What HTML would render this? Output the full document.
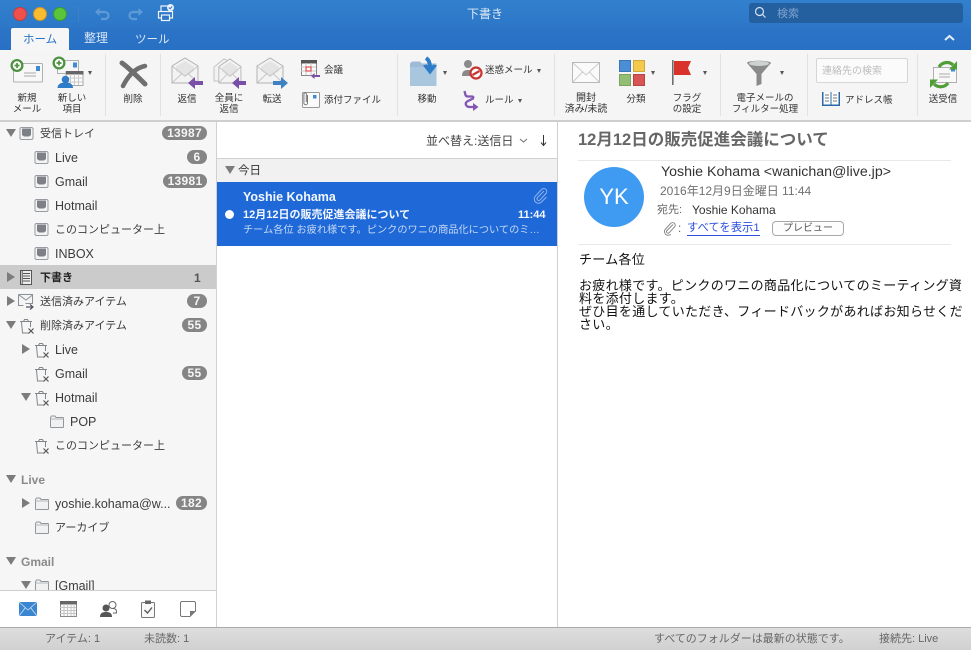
<!DOCTYPE html>
<html lang="ja"><head><meta charset="utf-8"><title>下書き</title>
<style>
html,body{margin:0;padding:0;width:971px;height:650px;overflow:hidden;background:#fff}
body{font-family:"Liberation Sans","Noto Sans CJK JP",sans-serif;color:#222;position:relative}
.a,.t,.c{position:absolute;white-space:nowrap}
.t{font-size:12px;line-height:14px}
.c{font-size:9.5px;line-height:10.5px;text-align:center;color:#333;transform:translateX(-50%)}
.r{position:absolute;white-space:nowrap;font-size:9.5px;line-height:12px;color:#333}
svg{position:absolute;overflow:visible}
.sep{position:absolute;top:54px;width:1px;height:62px;background:#e2e2e2}
.b{position:absolute;height:14px;border-radius:7px;background:#858585;color:#f5f5f5;font-size:12px;letter-spacing:.3px;font-weight:bold;line-height:14px;text-align:center}
.n{position:absolute;margin-top:1px;font-size:12.5px;line-height:14px;color:#3c3c3c;white-space:nowrap}
.j{font-size:11px}
.h{position:absolute;margin-top:1px;font-size:12px;font-weight:bold;line-height:14px;color:#8a8a8a}
.tri-d{position:absolute;width:0;height:0;border-left:5px solid transparent;border-right:5px solid transparent;border-top:8px solid #7c7c7c}
.tri-r{position:absolute;width:0;height:0;border-top:5px solid transparent;border-bottom:5px solid transparent;border-left:8px solid #7c7c7c}
.dd{position:absolute;width:0;height:0;border-left:2.5px solid transparent;border-right:2.5px solid transparent;border-top:4px solid #555}
.tile{position:absolute;width:12px;height:12px;box-sizing:border-box}
</style></head><body>
<svg width="0" height="0" style="position:absolute">
<defs>
<g id="inbox"><path d="M2 1.500h11l1 1v10l-1 1H2l-1-1v-10z" fill="#f4f4f4" stroke="#969ba1"/><path d="M3 2.500h9v6.500l-2 1.500H5L3 9z" fill="#7d8186"/></g>
<g id="trash"><path d="M2.500 4l1 11h6" fill="none" stroke="#80868c"/><path d="M11.500 4v5" stroke="#80868c"/><path d="M1 3.500h12M4.500 3.500l1-2h3l1 2" fill="none" stroke="#80868c"/><path d="M9.500 10.500l5 5m0-5l-5 5" stroke="#555" stroke-width="1.200"/></g>
<g id="folder"><path d="M1.500 3.500l1-1.500h3.500l1 1.500h7l.5 .5v9l-.5 .5h-12l-.5-.5z" fill="#f1f1f1" stroke="#92979c"/><path d="M1.500 5h13" stroke="#b5b8bb"/></g>
<g id="env"><path d="M1 9L14 1 27 9V26H1z" fill="#f3f3f3" stroke="#b2b2b2"/><path d="M5 9.500L14 4l9 5.500V14l-9 6-9-6z" fill="#e4e4e4"/><path d="M1.500 9.500L14 19 26.500 9.500M1.500 25.500l9.500-9M26.500 25.500l-9.500-9" stroke="#c6c6c6" fill="none"/></g>
</defs></svg>

<!-- title bar -->
<div class="a" style="left:0;top:0;width:971px;height:50px;background:linear-gradient(#3280cd,#2870c4)"></div>
<div class="a" style="left:13px;top:7px;width:12px;height:12px;border-radius:50%;background:#f0504c;border:.5px solid #c93d3a"></div>
<div class="a" style="left:33px;top:7px;width:12px;height:12px;border-radius:50%;background:#f8bc2e;border:.5px solid #c9962a"></div>
<div class="a" style="left:53px;top:7px;width:12px;height:12px;border-radius:50%;background:#5ac53b;border:.5px solid #3d9a2e"></div>
<div class="a" style="left:78px;top:6px;width:1px;height:16px;background:#4180c2"></div>
<svg style="left:94px;top:7px" width="17" height="13"><path d="M3 5h8a3.500 3.500 0 0 1 0 7H7" fill="none" stroke="#5f9ad6" stroke-width="2.200"/><path d="M1 5l4.500-4v8z" fill="#5f9ad6"/></svg>
<svg style="left:127px;top:7px" width="17" height="13"><path d="M14 5H6a3.500 3.500 0 0 0 0 7h4" fill="none" stroke="#5f9ad6" stroke-width="2.200"/><path d="M16 5l-4.500-4v8z" fill="#5f9ad6"/></svg>
<svg style="left:157px;top:4px" width="18" height="18"><path d="M4 7V2h8v5M4 14H1.500V7.500h14V14H13" fill="#2f78c8" stroke="#eef4fb" stroke-width="1.200"/><rect x="4.500" y="11" width="8" height="5.500" fill="#2f78c8" stroke="#eef4fb" stroke-width="1.200"/><circle cx="13.500" cy="3.500" r="3.500" fill="#eaf2fb"/><path d="M11.800 3.500l1.300 1.300 2-2.300" stroke="#2f78c8" fill="none"/></svg>
<div class="t" style="left:467px;top:7px;color:#dfeaf6">下書き</div>
<div class="a" style="left:749px;top:3px;width:214px;height:20px;border-radius:3px;background:#245f9f"></div>
<svg style="left:754px;top:6px" width="13" height="13"><circle cx="5.500" cy="5.500" r="4" fill="none" stroke="#d5e2f0" stroke-width="1.200"/><path d="M8.500 8.500l3 3" stroke="#d5e2f0" stroke-width="1.200"/></svg>
<div class="t" style="left:777px;top:7px;font-size:11px;color:#7fa5cf">検索</div>
<!-- tabs -->
<div class="a" style="left:0;top:28px;width:971px;height:22px;background:linear-gradient(#2b74c6,#2870c4)"></div>
<div class="a" style="left:11px;top:28px;width:58px;height:22px;background:#f6f6f6;border-radius:2px 2px 0 0"></div>
<div class="t" style="left:23px;top:33px;color:#2a74c5;font-size:11.500px">ホーム</div>
<div class="t" style="left:84px;top:31px;color:#d9e7f6">整理</div>
<div class="t" style="left:135px;top:33px;color:#d9e7f6;font-size:11.500px">ツール</div>
<svg style="left:944px;top:34px" width="11" height="8"><path d="M1 6l4.500-4L10 6" fill="none" stroke="#e4eef8" stroke-width="2"/></svg>

<!-- ribbon -->
<div class="a" style="left:0;top:50px;width:971px;height:70px;background:#f5f5f5"></div>
<div class="a" style="left:0;top:120px;width:971px;height:2px;background:#cfcfcf"></div>
<div class="sep" style="left:105px"></div><div class="sep" style="left:160px"></div><div class="sep" style="left:397px"></div><div class="sep" style="left:554px"></div>
<div class="sep" style="left:720px"></div><div class="sep" style="left:807px"></div><div class="sep" style="left:917px"></div>

<!-- new mail -->
<svg style="left:10px;top:58px" width="34" height="26"><rect x="3.500" y="5.500" width="29" height="18.500" rx="1" fill="#f8f8f8" stroke="#b0b0b0"/><rect x="26" y="8" width="4" height="5" fill="#3d8bd5"/><path d="M14 15h12M14 18h12" stroke="#aaa"/><circle cx="7" cy="7.500" r="6.500" fill="#4d9240"/><circle cx="7" cy="7.500" r="4.200" fill="#fff"/><path d="M7 5v5M4.500 7.500h5" stroke="#4d9240" stroke-width="1.700"/></svg>
<div class="c" style="left:27px;top:94px">新規<br>メール</div>
<!-- new item -->
<svg style="left:53px;top:57px" width="36" height="33"><rect x="4.500" y="3.500" width="21" height="13" fill="#f6f6f6" stroke="#b0b0b0"/><rect x="20" y="5.500" width="4" height="5" fill="#3d8bd5"/><rect x="13" y="14.500" width="17" height="14" fill="#fbfbfb" stroke="#a8a8a8"/><rect x="13" y="14" width="17.500" height="3.500" fill="#666"/><path d="M17.500 17v11M21.500 17v11M25.500 17v11M13 21h17M13 25h17" stroke="#cacaca"/><circle cx="12.500" cy="22.500" r="3.800" fill="#2f7cc9"/><path d="M4.500 31c0-4 3.500-5.500 8-5.500s7.500 1.500 7.500 5.500z" fill="#2f7cc9"/><circle cx="6" cy="6" r="6.500" fill="#4d9240"/><circle cx="6" cy="6" r="4.200" fill="#fff"/><path d="M6 3.500v5M3.500 6h5" stroke="#4d9240" stroke-width="1.700"/></svg>
<div class="dd" style="left:88px;top:71px"></div>
<div class="c" style="left:72px;top:94px">新しい<br>項目</div>
<!-- delete -->
<svg style="left:118px;top:59px" width="30" height="30"><path d="M4 4C11 9 20 18 27 25" fill="none" stroke="#6f6f6f" stroke-width="5" stroke-linecap="round"/><path d="M27 7C17 9 10 17 5 27" fill="none" stroke="#6f6f6f" stroke-width="4.500" stroke-linecap="round"/></svg>
<div class="c" style="left:133px;top:95px">削除</div>
<!-- reply -->
<svg style="left:171px;top:57px" width="34" height="34"><use href="#env"/><path d="M17 26l7-6v4h8v4h-8v4z" fill="#7a4fa8"/></svg>
<div class="c" style="left:187px;top:95px">返信</div>
<svg style="left:213px;top:57px" width="36" height="34"><path d="M1 10L11 2l9 4v18H1z" fill="#f2f2f2" stroke="#c4c4c4"/><use href="#env" transform="translate(5,1) scale(.85,.96)"/><path d="M19 26l7-6v4h7v4h-7v4z" fill="#7a4fa8"/></svg>
<div class="c" style="left:229px;top:94px">全員に<br>返信</div>
<svg style="left:256px;top:57px" width="34" height="34"><use href="#env"/><path d="M32 26l-7-6v4h-8v4h8v4z" fill="#3f82c4"/></svg>
<div class="c" style="left:272px;top:95px">転送</div>
<!-- meeting -->
<svg style="left:301px;top:60px" width="20" height="20"><rect x=".500" y=".500" width="15" height="15" fill="#fafafa" stroke="#888"/><rect x="0" y="0" width="16" height="3.500" fill="#555"/><path d="M5 3v12M10 3v12M0 7h15M0 11h15" stroke="#c8c8c8"/><rect x="5" y="7" width="5" height="4" fill="none" stroke="#d33"/><path d="M10 16l3.500-3v2H19v2h-5.500v2z" fill="#7a4fa8"/></svg>
<div class="r" style="left:324px;top:65px">会議</div>
<svg style="left:301px;top:91px" width="19" height="17"><rect x="1.500" y="1.500" width="17" height="15" rx="1" fill="#fafafa" stroke="#999"/><rect x="12" y="4" width="3.500" height="3.500" fill="#3d8bd5"/><path d="M6.500 4v8a1.800 1.800 0 0 1-3.600 0V3a1.200 1.200 0 0 1 2.400 0v8" fill="none" stroke="#777"/></svg>
<div class="r" style="left:324px;top:95px">添付ファイル</div>
<!-- move -->
<svg style="left:409px;top:57px" width="32" height="30"><path d="M1 6.500l2-2h8l2 2h14.500V29H1z" fill="#9dbbd6"/><path d="M1 10h26.500v19H1z" fill="#a9c6df"/><path d="M17 1c3 2 4 5 4 9" fill="none" stroke="#2f7cc9" stroke-width="4"/><path d="M14 8.500l7 9 7-9-3.500-1-3.500 2.500-3.500-2.500z" fill="#2f7cc9"/></svg>
<div class="dd" style="left:443px;top:71px"></div>
<div class="c" style="left:427px;top:95px">移動</div>
<svg style="left:461px;top:59px" width="22" height="21"><circle cx="7" cy="5" r="4" fill="#8a8a8a"/><path d="M1 17c0-5 2.500-6 6-6s6 1 6 6z" fill="#8a8a8a"/><circle cx="15" cy="14" r="5.500" fill="#fff" stroke="#c9332f" stroke-width="2.200"/><path d="M11.500 16l7-4" stroke="#c9332f" stroke-width="2.200"/></svg>
<div class="r" style="left:485px;top:65px">迷惑メール</div>
<div class="dd" style="left:537px;top:69px"></div>
<svg style="left:462px;top:90px" width="17" height="21"><path d="M2.500 1l1 4Q4 6.500 6 6.500h4Q12 6.500 11 8.500L6 11Q3 12.500 4 15 5 17 8 17h4" fill="none" stroke="#8256b4" stroke-width="2.300"/><path d="M11 13l5.500 4-5.500 4z" fill="#8256b4"/></svg>
<div class="r" style="left:485px;top:95px">ルール</div>
<div class="dd" style="left:518px;top:99px"></div>
<!-- read -->
<svg style="left:572px;top:62px" width="28" height="22"><rect x=".500" y=".500" width="27" height="20" fill="#fafafa" stroke="#b8b8b8"/><path d="M1 1l13 12L27 1M1 20l9.500-10M27 20l-9.500-10" fill="none" stroke="#cbcbcb"/></svg>
<div class="c" style="left:586px;top:94px;font-size:10px">開封<br>済み/未読</div>
<!-- categories -->
<div class="tile" style="left:619px;top:60px;background:#4a8fd6;border:.5px solid #3a76b3"></div>
<div class="tile" style="left:633px;top:60px;background:#f5ca4a;border:.5px solid #d1a83a"></div>
<div class="tile" style="left:619px;top:74px;background:#93bd72;border:.5px solid #7da35f"></div>
<div class="tile" style="left:633px;top:74px;background:#d95454;border:.5px solid #b84646"></div>
<div class="dd" style="left:651px;top:71px"></div>
<div class="c" style="left:636px;top:95px">分類</div>
<!-- flag -->
<svg style="left:672px;top:60px" width="22" height="26"><path d="M.800 0v25" stroke="#666" stroke-width="1.500"/><path d="M2 1h17l-3 7 3 7H2z" fill="#d9322c"/></svg>
<div class="dd" style="left:703px;top:71px"></div>
<div class="c" style="left:687px;top:94px">フラグ<br>の設定</div>
<!-- filter -->
<svg style="left:746px;top:60px" width="26" height="28"><path d="M1 3c0-3 24-3 24 0L15.500 14v10l-5 2V14z" fill="#8a8a8a"/><ellipse cx="13" cy="3.500" rx="10" ry="2.500" fill="#cfd2d2"/></svg>
<div class="dd" style="left:780px;top:71px"></div>
<div class="c" style="left:765px;top:94px">電子メールの<br>フィルター処理</div>
<!-- contact search -->
<div class="a" style="left:816px;top:58px;width:90px;height:23px;background:#fbfbfb;border:1px solid #d6d6d6;border-radius:2px"></div>
<div class="t" style="left:822px;top:65px;font-size:10px;color:#bcbcbc">連絡先の検索</div>
<svg style="left:821px;top:91px" width="20" height="16"><path d="M1 1h18v14H1z" fill="#2a67a8"/><path d="M2.500 1h7v12.500h-7zM10.500 1h7v12.500h-7z" fill="#fdfdfd"/><path d="M4 4h4M4 7h4M4 10h4M12 4h4M12 7h4M12 10h4" stroke="#777"/></svg>
<div class="r" style="left:845px;top:95px">アドレス帳</div>
<!-- send/receive -->
<svg style="left:929px;top:60px" width="29" height="29"><rect x="4.500" y="7.500" width="23" height="15" fill="#f8f8f8" stroke="#b0b0b0"/><rect x="22" y="9" width="4" height="2.500" fill="#3d8bd5"/><path d="M10 14h11M10 17h11" stroke="#aaa"/><path d="M10 7C13 2 20 1 24 5" fill="none" stroke="#4f9e37" stroke-width="3.200"/><path d="M28 1v8.500h-8z" fill="#4f9e37"/><path d="M19 23C16 27.500 9 28 5 24" fill="none" stroke="#4f9e37" stroke-width="3.200"/><path d="M1 28v-8.500h8z" fill="#4f9e37"/></svg>
<div class="c" style="left:943px;top:95px">送受信</div>

<!-- sidebar -->
<div class="a" style="left:0;top:122px;width:216px;height:468px;background:#f6f6f6;overflow:hidden"></div>
<div class="a" style="left:216px;top:122px;width:1px;height:506px;background:#d0d0d0"></div>
<div class="a" style="left:0;top:265px;width:216px;height:24px;background:#cbcbcb"></div>

<div class="tri-d" style="left:6px;top:129px"></div>
<svg style="left:19px;top:126px" width="15" height="15"><use href="#inbox"/></svg><div class="n j" style="left:40px;top:126px">受信トレイ</div><div class="b" style="left:162px;top:126px;width:45px">13987</div>
<svg style="left:34px;top:150px" width="15" height="15"><use href="#inbox"/></svg><div class="n" style="left:55px;top:150px">Live</div><div class="b" style="left:187px;top:150px;width:20px">6</div>
<svg style="left:34px;top:174px" width="15" height="15"><use href="#inbox"/></svg><div class="n" style="left:55px;top:174px">Gmail</div><div class="b" style="left:163px;top:174px;width:44px">13981</div>
<svg style="left:34px;top:198px" width="15" height="15"><use href="#inbox"/></svg><div class="n" style="left:55px;top:198px">Hotmail</div>
<svg style="left:34px;top:222px" width="15" height="15"><use href="#inbox"/></svg><div class="n j" style="left:55px;top:222px">このコンピューター上</div>
<svg style="left:34px;top:246px" width="15" height="15"><use href="#inbox"/></svg><div class="n" style="left:55px;top:246px">INBOX</div>

<div class="tri-r" style="left:7px;top:272px"></div>
<svg style="left:20px;top:270px" width="12" height="15"><rect x=".500" y=".500" width="11" height="14" fill="#eee" stroke="#555"/><path d="M3 3.500h7M3 6h7M3 8.500h7M3 11h7" stroke="#555"/><path d="M2.200 1v13" stroke="#555"/></svg>
<div class="n j" style="left:40px;top:270px;font-weight:bold;color:#222">下書き</div><div class="a" style="left:194px;top:271px;font-size:12px;font-weight:bold;line-height:14px;color:#555">1</div>

<div class="tri-r" style="left:7px;top:296px"></div>
<svg style="left:18px;top:294px" width="17" height="16"><path d="M.500.500h14v9H7.500M.500.500v11h5" fill="#f4f4f4" stroke="#8a9096"/><path d="M1 1l7 5 6.500-5" fill="none" stroke="#8a9096"/><path d="M8 13h6.500M12 10.500l3 2.500-3 2.500" fill="none" stroke="#556" stroke-width="1.200"/></svg>
<div class="n j" style="left:40px;top:294px">送信済みアイテム</div><div class="b" style="left:187px;top:294px;width:20px">7</div>

<div class="tri-d" style="left:6px;top:321px"></div>
<svg style="left:19px;top:318px" width="16" height="16"><use href="#trash"/></svg><div class="n j" style="left:40px;top:318px">削除済みアイテム</div><div class="b" style="left:182px;top:318px;width:25px">55</div>
<div class="tri-r" style="left:22px;top:344px"></div>
<svg style="left:34px;top:342px" width="16" height="16"><use href="#trash"/></svg><div class="n" style="left:55px;top:342px">Live</div>
<svg style="left:34px;top:366px" width="16" height="16"><use href="#trash"/></svg><div class="n" style="left:55px;top:366px">Gmail</div><div class="b" style="left:182px;top:366px;width:25px">55</div>
<div class="tri-d" style="left:21px;top:393px"></div>
<svg style="left:34px;top:390px" width="16" height="16"><use href="#trash"/></svg><div class="n" style="left:55px;top:390px">Hotmail</div>
<svg style="left:49px;top:414px" width="16" height="15"><use href="#folder"/></svg><div class="n" style="left:70px;top:414px">POP</div>
<svg style="left:34px;top:438px" width="16" height="16"><use href="#trash"/></svg><div class="n j" style="left:55px;top:438px">このコンピューター上</div>

<div class="tri-d" style="left:6px;top:475px"></div><div class="h" style="left:21px;top:472px">Live</div>
<div class="tri-r" style="left:22px;top:498px"></div>
<svg style="left:34px;top:496px" width="16" height="15"><use href="#folder"/></svg><div class="n" style="left:55px;top:496px">yoshie.kohama@w...</div><div class="b" style="left:176px;top:496px;width:31px">182</div>
<svg style="left:34px;top:520px" width="16" height="15"><use href="#folder"/></svg><div class="n j" style="left:55px;top:520px">アーカイブ</div>
<div class="tri-d" style="left:6px;top:557px"></div><div class="h" style="left:21px;top:554px">Gmail</div>
<div class="a" style="left:0;top:570px;width:216px;height:20px;overflow:hidden">
<div class="tri-d" style="left:21px;top:11px"></div>
<svg style="left:34px;top:8px" width="16" height="15"><use href="#folder"/></svg><div class="n" style="left:55px;top:8px">[Gmail]</div></div>

<!-- bottom nav -->
<div class="a" style="left:0;top:590px;width:216px;height:1px;background:#cfcfcf"></div>
<div class="a" style="left:0;top:591px;width:216px;height:37px;background:#fff"></div>
<svg style="left:19px;top:602px" width="18" height="14"><rect width="18" height="14" fill="#3b86d0"/><path d="M0 0l9 8 9-8M0 14l6.500-8.500M18 14l-6.500-8.500" fill="none" stroke="#cfe2f4" stroke-width=".800"/></svg>
<svg style="left:60px;top:601px" width="17" height="16"><rect x=".500" y=".500" width="16" height="15" fill="#fafafa" stroke="#8a8a8a"/><rect width="17" height="3.500" fill="#666"/><path d="M4 3v12M7.500 3v12M11 3v12M14 3v12M0 6.500h16M0 9.500h16M0 12.500h16" stroke="#c6c6c6"/></svg>
<svg style="left:99px;top:600px" width="19" height="18"><circle cx="13.500" cy="5" r="3.500" fill="#fff" stroke="#666"/><path d="M14 8.500c3 0 4 2 3.500 4.500H14" fill="#fff" stroke="#666"/><circle cx="7" cy="8" r="3.500" fill="#555"/><path d="M1 17c0-4 2.500-5 6-5s6 1 6 5z" fill="#555"/></svg>
<svg style="left:141px;top:600px" width="14" height="18"><rect x=".500" y="2.500" width="13" height="15" rx="1" fill="#fafafa" stroke="#777"/><rect x="4" y=".500" width="6" height="3.500" fill="#666"/><path d="M3.500 10l3 3 4.500-5.500" fill="none" stroke="#555" stroke-width="1.300"/></svg>
<svg style="left:180px;top:601px" width="16" height="16"><path d="M1.500.500h13l1 1V10L10 15.500H1.500l-1-1V1.500z" fill="#fff" stroke="#777"/><path d="M15.500 10H10v5.500z" fill="#777"/></svg>

<!-- message list -->
<div class="t" style="left:426px;top:134px;font-size:12px;color:#444">並べ替え:送信日</div>
<svg style="left:519px;top:138px" width="9" height="6"><path d="M1 1l3.500 3L8 1" fill="none" stroke="#777" stroke-width="1.100"/></svg>
<svg style="left:540px;top:135px" width="7" height="12"><path d="M3.500 0v10M1 7.500l2.500 3 2.500-3" fill="none" stroke="#333" stroke-width="1"/></svg>
<div class="a" style="left:217px;top:158px;width:340px;height:1px;background:#cfcfcf"></div>
<div class="a" style="left:217px;top:159px;width:340px;height:23px;background:#f1f1f1"></div>
<div class="tri-d" style="left:225px;top:166px"></div>
<div class="t" style="left:238px;top:164px;font-size:11.500px;color:#333">今日</div>
<div class="a" style="left:217px;top:182px;width:340px;height:64px;background:#1e68d8"></div>
<div class="a" style="left:225px;top:210px;width:9px;height:9px;border-radius:50%;background:#fff"></div>
<div class="t" style="left:243px;top:190px;font-size:12.500px;font-weight:bold;color:#f4f8fe">Yoshie Kohama</div>
<div class="t" style="left:243px;top:208px;font-size:11px;font-weight:bold;color:#f4f8fe">12月12日の販売促進会議について</div>
<div class="t" style="left:518px;top:208px;font-size:11px;font-weight:bold;color:#f4f8fe">11:44</div>
<div class="t" style="left:243px;top:224px;font-size:10.200px;color:#c6d9f5">チーム各位 お疲れ様です。ピンクのワニの商品化についてのミ…</div>
<svg style="left:534px;top:188px" width="14" height="15"><path d="M10 3L3.500 9.500a1.700 1.700 0 0 0 2.500 2.500l6-6.500a3 3 0 0 0-4.500-4L1.500 8a4.200 4.200 0 0 0 6 6L12.500 9" fill="none" stroke="#8fb4ea" stroke-width="1"/></svg>
<div class="a" style="left:557px;top:122px;width:1px;height:506px;background:#cfcfcf"></div>

<!-- reading pane -->
<div class="t" style="left:578px;top:131px;font-size:16.500px;line-height:19px;font-weight:bold;color:#666">12月12日の販売促進会議について</div>
<div class="a" style="left:578px;top:160px;width:373px;height:1px;background:#e8e8e8"></div>
<div class="a" style="left:584px;top:167px;width:60px;height:60px;border-radius:50%;background:#3f9bf1;color:#fff;font-size:22px;line-height:60px;text-align:center">YK</div>
<div class="t" style="left:661px;top:164px;font-size:14.200px;line-height:16px;color:#333">Yoshie Kohama &lt;wanichan@live.jp&gt;</div>
<div class="t" style="left:660px;top:184px;font-size:12px;color:#707070">2016年12月9日金曜日 11:44</div>
<div class="t" style="left:657px;top:203px;font-size:11px;color:#666">宛先:</div>
<div class="t" style="left:692px;top:203px;font-size:12px;color:#333">Yoshie Kohama</div>
<svg style="left:664px;top:222px" width="13" height="13"><path d="M9 2.500L3 8.500a1.500 1.500 0 0 0 2.200 2.200l5.500-6a2.600 2.600 0 0 0-3.800-3.500L1.500 7a3.700 3.700 0 0 0 5.300 5.200" fill="none" stroke="#888" stroke-width="1"/></svg>
<div class="t" style="left:678px;top:222px;font-size:11.500px;color:#666">:</div>
<div class="t" style="left:687px;top:221px;font-size:11.300px;line-height:15px;color:#2c50df;border-bottom:1px solid #2c50df;height:14px">すべてを表示1</div>
<div class="a" style="left:772px;top:221px;width:70px;height:13px;border:1px solid #a8a8a8;border-radius:4px;background:#fdfdfd;text-align:center;font-size:10px;line-height:14px;color:#555">プレビュー</div>
<div class="a" style="left:578px;top:244px;width:373px;height:1px;background:#e8e8e8"></div>
<div class="a" style="left:579px;top:253px;width:388px;font-size:13px;line-height:13px;color:#111;white-space:normal;letter-spacing:.3px">チーム各位<br><br>お疲れ様です。ピンクのワニの商品化についてのミーティング資料を添付します。<br>ぜひ目を通していただき、フィードバックがあればお知らせください。</div>

<!-- status bar -->
<div class="a" style="left:0;top:627px;width:971px;height:1px;background:#a9a9a9"></div>
<div class="a" style="left:0;top:628px;width:971px;height:22px;background:linear-gradient(#dedede,#d0d0d0)"></div>
<div class="t" style="left:45px;top:632px;font-size:11px;color:#666">アイテム: 1</div>
<div class="t" style="left:144px;top:632px;font-size:11px;color:#666">未読数: 1</div>
<div class="t" style="left:654px;top:632px;font-size:11px;color:#666">すべてのフォルダーは最新の状態です。</div>
<div class="t" style="left:879px;top:632px;font-size:11px;color:#666">接続先: Live</div>
</body></html>
